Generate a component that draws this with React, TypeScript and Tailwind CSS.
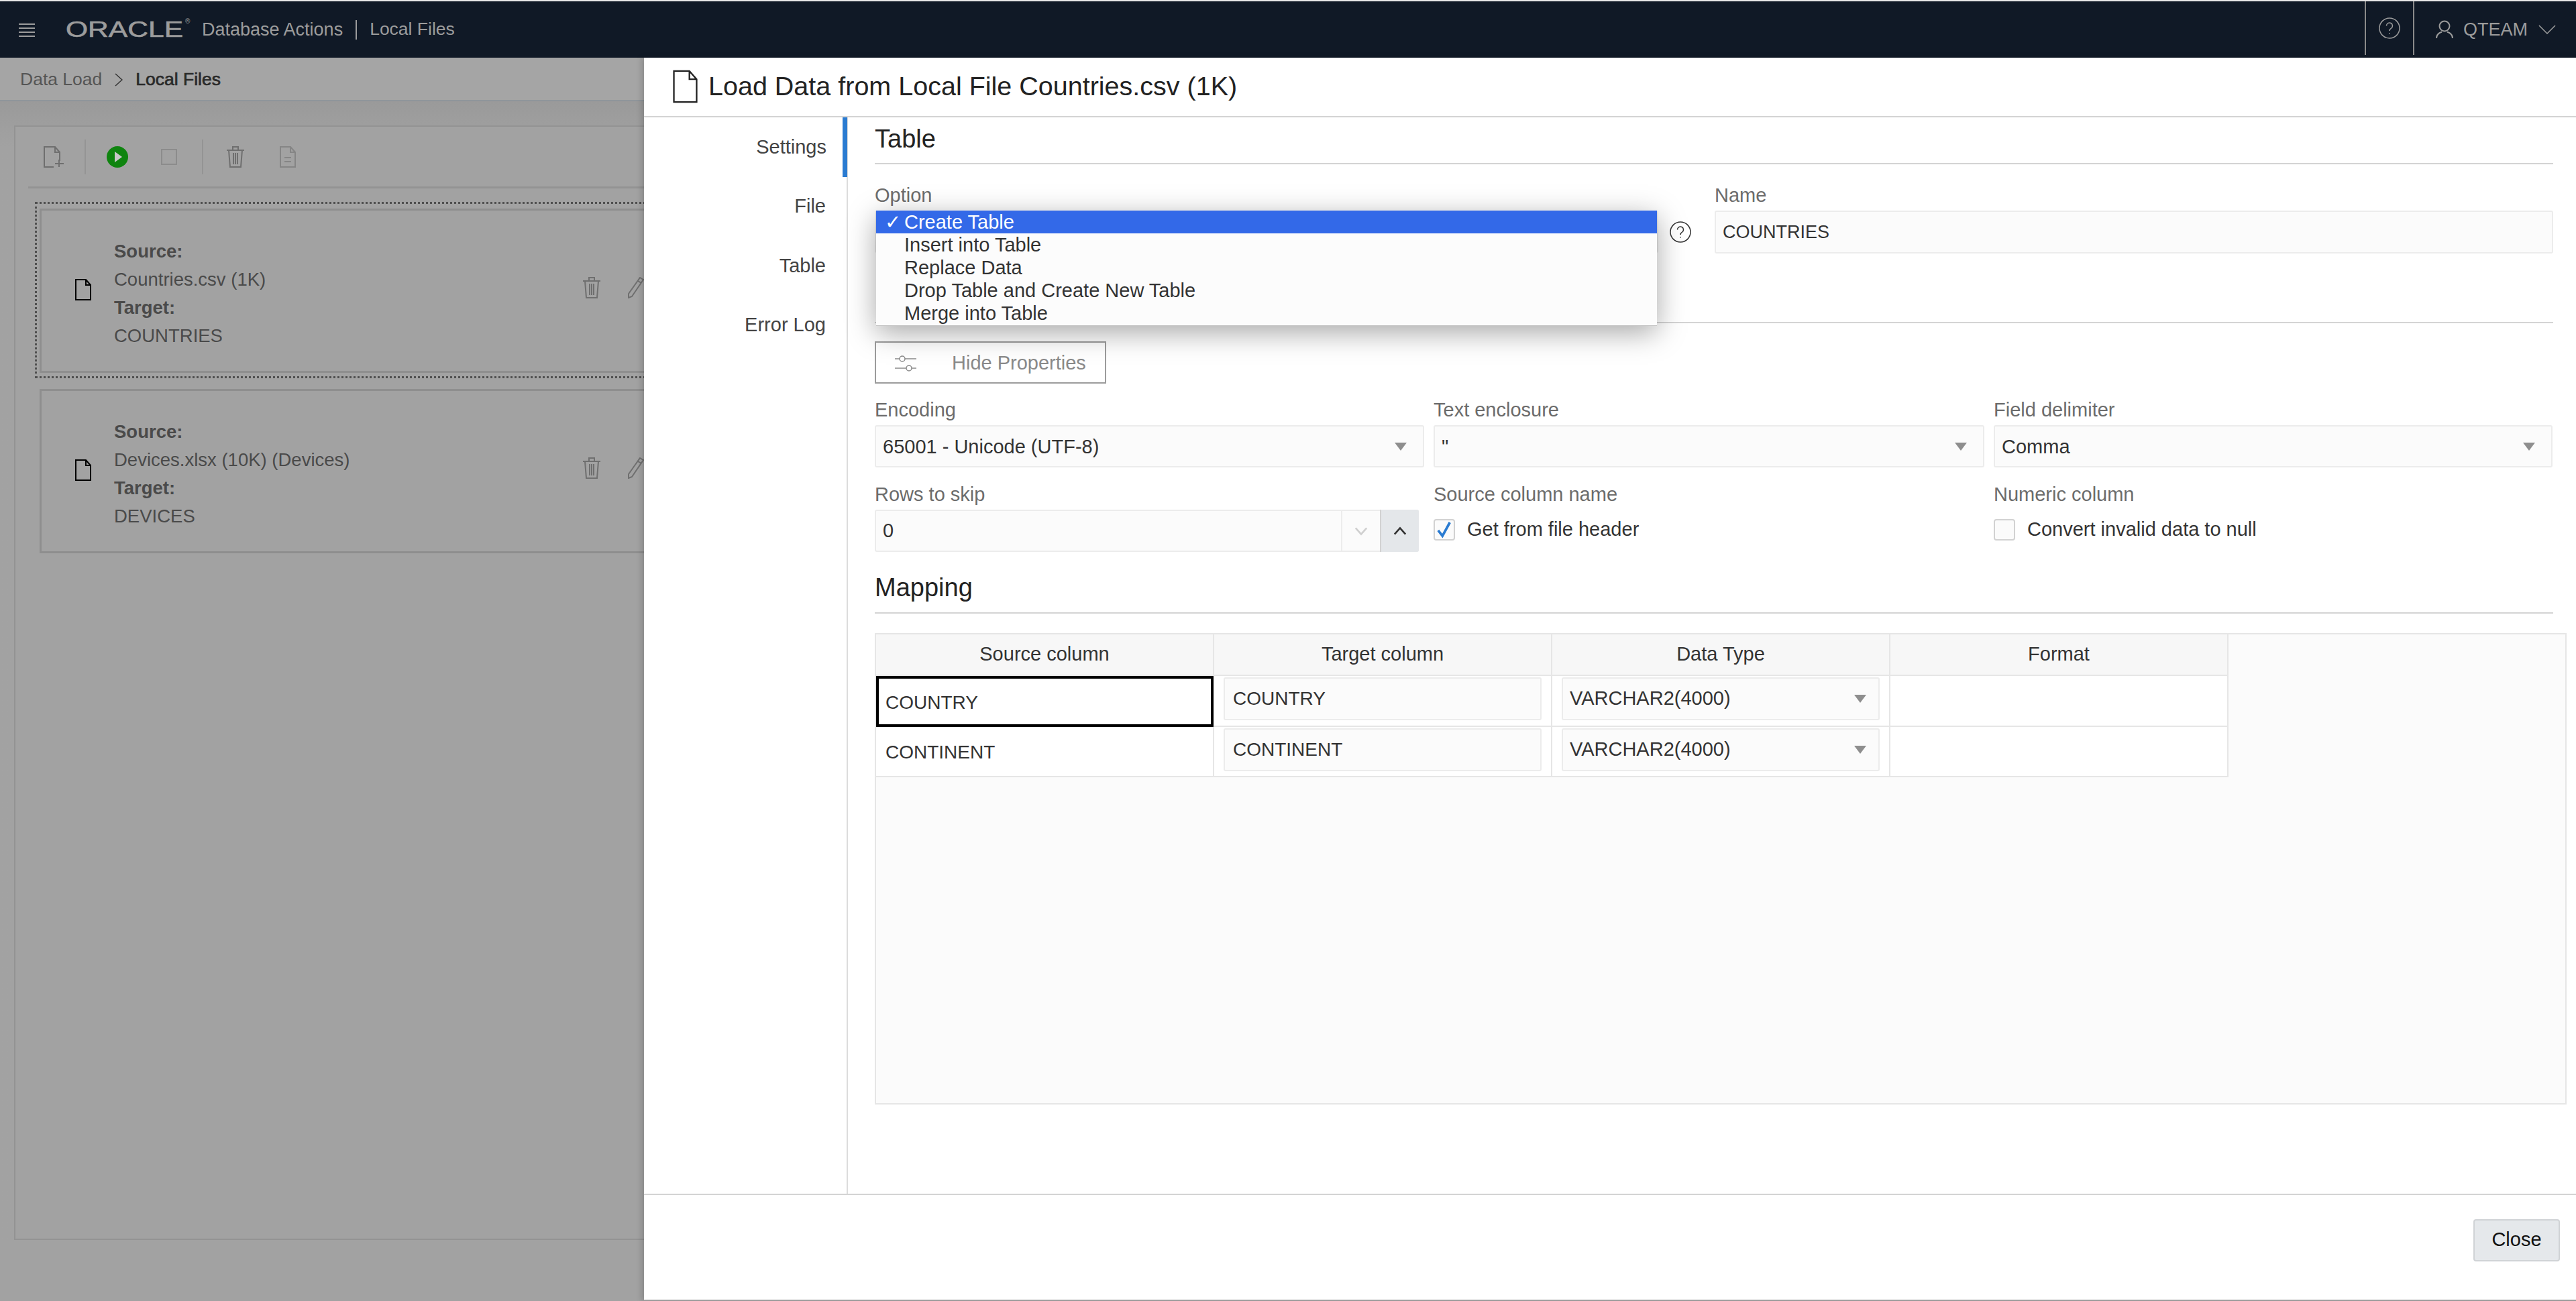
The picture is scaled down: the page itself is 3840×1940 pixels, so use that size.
import type { ReactNode } from 'react'

const options = ['Create Table', 'Insert into Table', 'Replace Data', 'Drop Table and Create New Table', 'Merge into Table']
const navItems = ['Settings', 'File', 'Table', 'Error Log']

function FileIcon({ className, stroke = '#000', strokeWidth = 2 }: { className: string; stroke?: string; strokeWidth?: number }) {
	return (
		<svg viewBox="0 0 24 32" className={className} fill="none" stroke={stroke} strokeWidth={strokeWidth}>
			<path d="M1 1h15l7 8v22H1z" />
			<path d="M16 1v8h7" />
		</svg>
	)
}

function TrashIcon({ className }: { className: string }) {
	return (
		<svg viewBox="0 0 26 32" className={className} fill="none" stroke="#6f6f6f" strokeWidth="2">
			<path d="M0 6h26M9 6V1h8v5M3 6l2 25h16l2-25M10 10v17M13 10v17M16 10v17" />
		</svg>
	)
}

function PencilIcon({ className }: { className: string }) {
	return (
		<svg viewBox="0 0 24 32" className={className} fill="none" stroke="#6f6f6f" strokeWidth="2">
			<path d="M18 1l5 3L6 29l-5 2 0-6zM15 6l5 3" />
		</svg>
	)
}

function Caret() {
	return <div className="w-0 h-0 border-l-[9px] border-r-[9px] border-t-[12px] border-l-transparent border-r-transparent border-t-[#8e8e8e]" />
}

function SelectBox({ value, compact }: { value: string; compact?: boolean }) {
	return (
		<div className={`flex items-center justify-between pl-[10px] bg-[#fbfbfb] border-2 border-[#ececec] rounded-[3px] text-[#333] ${compact ? 'h-[64px] pr-[18px]' : 'h-[63px] pr-[24px]'}`}>
			<span className={compact ? '' : 'mt-[3px]'}>{value}</span>
			<Caret />
		</div>
	)
}

function Field({ label, children }: { label: string; children: ReactNode }) {
	return (
		<div>
			<div className="h-[32px] leading-[32px] mb-[7px] text-[#6c6c6c]">{label}</div>
			{children}
		</div>
	)
}

function Check({ label, checked }: { label: string; checked?: boolean }) {
	return (
		<div className="flex items-center h-[63px] -mt-[2px]">
			<div className="flex items-center justify-center w-[32px] h-[32px] mr-[18px] border-2 border-[#d2d2d2] rounded-[4px] bg-[#fbfbfb]">
				{checked && (
					<svg viewBox="0 0 24 28" className="w-[22px] h-[26px]" fill="none" stroke="#2a7bd1" strokeWidth="4">
						<path d="M2 15l7 9L21 2" />
					</svg>
				)}
			</div>
			<span className="text-[#333]">{label}</span>
		</div>
	)
}

function SourceCard({ source, target, selected }: { source: string; target: string; selected?: boolean }) {
	const card = (
		<div className="flex items-center h-[245px] w-[1100px] pl-[50px] border-[3px] border-[#8e8e8e] bg-[#a2a2a2]">
			<FileIcon className="w-[24px] h-[32px] mr-[34px] -mt-[3px]" />
			<div className="flex-none w-[699px] mt-[8px] text-[#4a4a4a] text-[27.500px] leading-[42px]">
				<div className="font-bold">Source:</div>
				<div>{source}</div>
				<div className="font-bold">Target:</div>
				<div>{target}</div>
			</div>
			<TrashIcon className="w-[26px] h-[32px] -mt-[10px] mr-[41px]" />
			<PencilIcon className="w-[24px] h-[32px] -mt-[10px]" />
		</div>
	)
	if (!selected) return <div className="ml-[36px] mt-[16px]">{card}</div>
	return <div className="ml-[29px] mt-[20px] w-[1200px] pl-[4px] pt-[7px] pb-[5px] border-[3px] border-dotted border-[#4f4f4f]">{card}</div>
}

export default function App() {
	return (
		<div className="relative w-[3840px] h-[1940px] overflow-hidden bg-[#a2a2a2] font-['Liberation_Sans',sans-serif] text-[29px]">
			<div className="h-[2px] bg-[#e8e8e8]" />
			<header className="flex items-center h-[84px] bg-[#101926] text-[#9c9c9c] text-[27px]">
				<div className="flex flex-col justify-between w-[24px] h-[21px] ml-[28px] mr-[46px] mt-[2px]">
					<div className="h-[2px] bg-[#9c9c9c]" />
					<div className="h-[2px] bg-[#9c9c9c]" />
					<div className="h-[2px] bg-[#9c9c9c]" />
					<div className="h-[2px] bg-[#9c9c9c]" />
				</div>
				<div className="relative w-[203px] h-[40px]">
					<span className="absolute left-0 top-0 origin-left scale-x-[1.29] text-[33px] leading-[40px] [-webkit-text-stroke:0.6px_#9c9c9c]">ORACLE</span>
					<span className="absolute left-[178px] top-[2px] text-[10px] leading-[12px]">®</span>
				</div>
				<span>Database Actions</span>
				<div className="w-[2px] h-[29px] mx-[19px] bg-[#9c9c9c]" />
				<span className="text-[26.500px]">Local Files</span>
				<div className="flex-1" />
				<div className="flex items-center justify-center w-[74px] h-[80px] self-start border-x-2 border-[#8a8a8a]">
					<svg viewBox="0 0 32 32" className="w-[32px] h-[32px]" fill="none" stroke="#9c9c9c" strokeWidth="1.5">
						<circle cx="16" cy="16" r="15" />
						<path d="M11.5 12.5a4.5 4.5 0 1 1 7 3.7c-1.6 1-2.5 1.8-2.5 3.8M16 23v1.6" />
					</svg>
				</div>
				<svg viewBox="0 0 26 28" className="w-[26px] h-[28px] ml-[32px] mr-[15px]" fill="none" stroke="#9c9c9c" strokeWidth="2">
					<circle cx="13" cy="9" r="7.5" />
					<path d="M1 27c0-6 4-8 8-9.500M25 27c0-6-4-8-8-9.500" />
				</svg>
				<span>QTEAM</span>
				<svg viewBox="0 0 26 14" className="w-[26px] h-[14px] ml-[16px] mr-[30px]" fill="none" stroke="#9c9c9c" strokeWidth="1.5">
					<path d="M1 1l12 12L25 1" />
				</svg>
			</header>

			<nav className="flex items-center h-[65px] pl-[30px] pt-[2px] bg-[#a5a5a5] border-b-2 border-[#8f959b] text-[26.500px] text-[#555]">
				<span>Data Load</span>
				<svg viewBox="0 0 12 20" className="w-[12px] h-[20px] mx-[19px]" fill="none" stroke="#333" strokeWidth="1.5">
					<path d="M1 1l10 9-10 9" />
				</svg>
				<span className="text-[#2a2a2a] [-webkit-text-stroke:0.7px_#2a2a2a]">Local Files</span>
			</nav>

			<div className="h-[1703px] pt-[36px] pl-[21px] bg-gradient-to-b from-[#9a9a9a] to-[#a2a2a2] to-[4%]">
				<div className="w-[1300px] h-[1662px] border-2 border-[#939393] bg-[#a2a2a2]">
					<div className="flex items-center h-[92px] ml-[19px] border-b-[3px] border-[#939393]">
						<svg viewBox="0 0 30 32" className="w-[30px] h-[32px] ml-[23px]" fill="none" stroke="#6f6f6f" strokeWidth="2">
							<path d="M24 22V9l-7-8H1v30h14M17 1v8h7M23 20v11M17 26h13" />
						</svg>
						<div className="w-[2px] h-[52px] ml-[31px] bg-[#949494]" />
						<svg viewBox="0 0 32 32" className="w-[32px] h-[32px] ml-[31px]">
							<circle cx="16" cy="16" r="16" fill="#0f840f" />
							<path d="M12 8l11 8-11 8z" fill="#c8c8c8" />
						</svg>
						<div className="w-[24px] h-[24px] ml-[49px] border-2 border-[#8c8c8c]" />
						<div className="w-[2px] h-[52px] ml-[37px] bg-[#949494]" />
						<TrashIcon className="w-[26px] h-[32px] ml-[35px]" />
						<svg viewBox="0 0 24 32" className="w-[24px] h-[32px] ml-[53px]" fill="none" stroke="#858585" strokeWidth="2">
							<path d="M1 1h15l7 8v22H1zM16 1v8h7M7 17h10M7 23h10" />
						</svg>
					</div>
					<SourceCard source="Countries.csv (1K)" target="COUNTRIES" selected />
					<SourceCard source="Devices.xlsx (10K) (Devices)" target="DEVICES" />
				</div>
			</div>

			{/* modal sits over the page */}
			<div className="absolute left-[960px] right-0 top-[86px] bottom-0 flex flex-col bg-white border-b-2 border-[#9c9c9c] shadow-[-4px_0_8px_rgba(0,0,0,0.15)]">
				<div className="flex items-center flex-none h-[89px] pl-[43px] pb-[2px] border-b-2 border-[#d4d4d4]">
					<FileIcon className="w-[37px] h-[50px] mr-[16px]" stroke="#222" strokeWidth={1.500} />
					<h1 className="text-[39.500px] font-normal text-[#222]">Load Data from Local File Countries.csv (1K)</h1>
				</div>

				<div className="flex flex-1 min-h-0">
					<aside className="flex-none w-[304px] border-r-2 border-[#dcdcdc] text-[#444]">
						{navItems.map((item, index) => (
							<div
								key={item}
								className={`flex items-center justify-end h-[88.500px] ${index === 0 ? 'border-r-[7px] border-[#2a7bd1] w-[303px] pr-[24px]' : 'pr-[31px]'}`}
							>
								{item}
							</div>
						))}
					</aside>

					<main className="flex-1 min-w-0 pl-[40px] pr-[34px]">
						<h2 className="h-[70px] leading-[64px] text-[38px] font-normal text-[#222] border-b-2 border-[#d4d4d4]">Table</h2>

						<div className="flex mt-[30px]">
							<div className="relative w-[1168px]">
								<Field label="Option">
									<SelectBox value="" />
								</Field>
								<div className="absolute left-[2px] top-[39px] w-[1164px] pb-[1px] bg-[#fcfcfc] text-[#333] leading-[34px] shadow-[0_10px_40px_rgba(0,0,0,0.35)] border-b border-[#c4c4c4] z-10">
									{options.map((option, index) => (
										<div key={option} className={`h-[34px] pl-[42px] relative ${index === 0 ? 'bg-[#3369e8] text-white' : ''}`}>
											{index === 0 && <span className="absolute left-[13px] top-0">✓</span>}
											{option}
										</div>
									))}
								</div>
							</div>
							<svg viewBox="0 0 32 32" className="w-[32px] h-[32px] mt-[55px] ml-[17px] mr-[35px]" fill="none" stroke="#333" strokeWidth="1.5">
								<circle cx="16" cy="16" r="15" />
								<path d="M11.5 12.5a4.500 4.500 0 1 1 7 3.700c-1.600 1-2.500 1.800-2.500 3.800M16 23v1.600" />
							</svg>
							<div className="flex-1">
								<Field label="Name">
									<div className="flex items-center h-[64px] pl-[10px] bg-[#fbfbfb] border-2 border-[#ececec] rounded-[3px] text-[27px] text-[#333]">COUNTRIES</div>
								</Field>
							</div>
						</div>

						<div className="mt-[102px] h-[2px] bg-[#d4d4d4]" />

						<button className="flex items-center w-[345px] h-[63px] mt-[27px] pl-[28px] pt-[2px] border-2 border-[#9c9c9c] text-[#8a8a8a]">
							<svg viewBox="0 0 32 24" className="w-[32px] h-[24px] mr-[53px]" fill="none" stroke="#8a8a8a" strokeWidth="1.5">
								<path d="M0 5h7M15 5h17M0 19h17M25 19h7" />
								<circle cx="11" cy="5" r="4" />
								<circle cx="21" cy="19" r="4" />
							</svg>
							Hide Properties
						</button>

						<div className="grid grid-cols-[819px_821px_833px] gap-x-[14px] gap-y-[24px] mt-[23px]">
							<Field label="Encoding">
								<SelectBox value="65001 - Unicode (UTF-8)" />
							</Field>
							<Field label="Text enclosure">
								<SelectBox value={'"'} />
							</Field>
							<Field label="Field delimiter">
								<SelectBox value="Comma" />
							</Field>
							<Field label="Rows to skip">
								<div className="flex w-[811px] h-[63px] bg-[#fbfbfb] border-2 border-[#ececec] rounded-[3px] text-[#333]">
									<div className="flex items-center flex-1 pl-[10px]">0</div>
									<div className="flex items-center justify-center w-[58px] border-l-2 border-[#ececec]">
										<svg viewBox="0 0 22 14" className="w-[20px] h-[14px]" fill="none" stroke="#cfcfcf" strokeWidth="3">
											<path d="M2 2l9 10 9-10" />
										</svg>
									</div>
									<div className="flex items-center justify-center w-[58px] -mr-[2px] -my-[2px] bg-[#e4e7ea] border-l-2 border-[#d2d2d2] rounded-r-[3px]">
										<svg viewBox="0 0 22 14" className="w-[20px] h-[14px]" fill="none" stroke="#333" strokeWidth="3">
											<path d="M2 12l9-10 9 10" />
										</svg>
									</div>
								</div>
							</Field>
							<Field label="Source column name">
								<Check label="Get from file header" checked />
							</Field>
							<Field label="Numeric column">
								<Check label="Convert invalid data to null" />
							</Field>
						</div>

						<h2 className="h-[70px] mt-[22px] leading-[62px] text-[38px] font-normal text-[#222] border-b-2 border-[#d4d4d4]">Mapping</h2>

						<div className="w-[2522px] h-[703px] mt-[29px] bg-[#fbfbfb] border-2 border-[#e6e6e6]">
							<div className="grid grid-cols-[504px_504px_504px_504px] w-[2016px] text-[#333]">
								{['Source column', 'Target column', 'Data Type', 'Format'].map(title => (
									<div key={title} className="flex items-center justify-center h-[62px] bg-[#f7f7f7] border-r-2 border-b-2 border-[#e6e6e6]">
										{title}
									</div>
								))}
								{['COUNTRY', 'CONTINENT'].map((name, index) => [
									<div key={`${name}-source`} className={`flex items-center h-[75.500px] pt-[4px] bg-white text-[28px] ${index === 0 ? 'pl-[10px] border-[4px] border-black mr-[1px]' : 'pl-[14px] border-r-2 border-b-2 border-[#e6e6e6]'}`}>
										{name}
									</div>,
									<div key={`${name}-target`} className="h-[75.500px] pt-[2px] px-[14px] bg-white border-r-2 border-b-2 border-[#e6e6e6]">
										<div className="flex items-center h-[64px] pl-[12px] bg-[#fbfbfb] border-2 border-[#ececec] rounded-[3px] text-[28px]">{name}</div>
									</div>,
									<div key={`${name}-type`} className="h-[75.500px] pt-[2px] px-[14px] bg-white border-r-2 border-b-2 border-[#e6e6e6]">
										<SelectBox value="VARCHAR2(4000)" compact />
									</div>,
									<div key={`${name}-format`} className="h-[75.500px] bg-white border-r-2 border-b-2 border-[#e6e6e6]" />
								])}
							</div>
						</div>
					</main>
				</div>

				<footer className="flex items-center justify-end flex-none h-[158px] pr-[24px] pb-[22px] border-t-2 border-[#d4d4d4]">
					<button className="w-[129px] h-[63px] bg-[#e5e8eb] border-2 border-[#d0d3d6] rounded-[4px] text-[#111]">Close</button>
				</footer>
			</div>
		</div>
	)
}
